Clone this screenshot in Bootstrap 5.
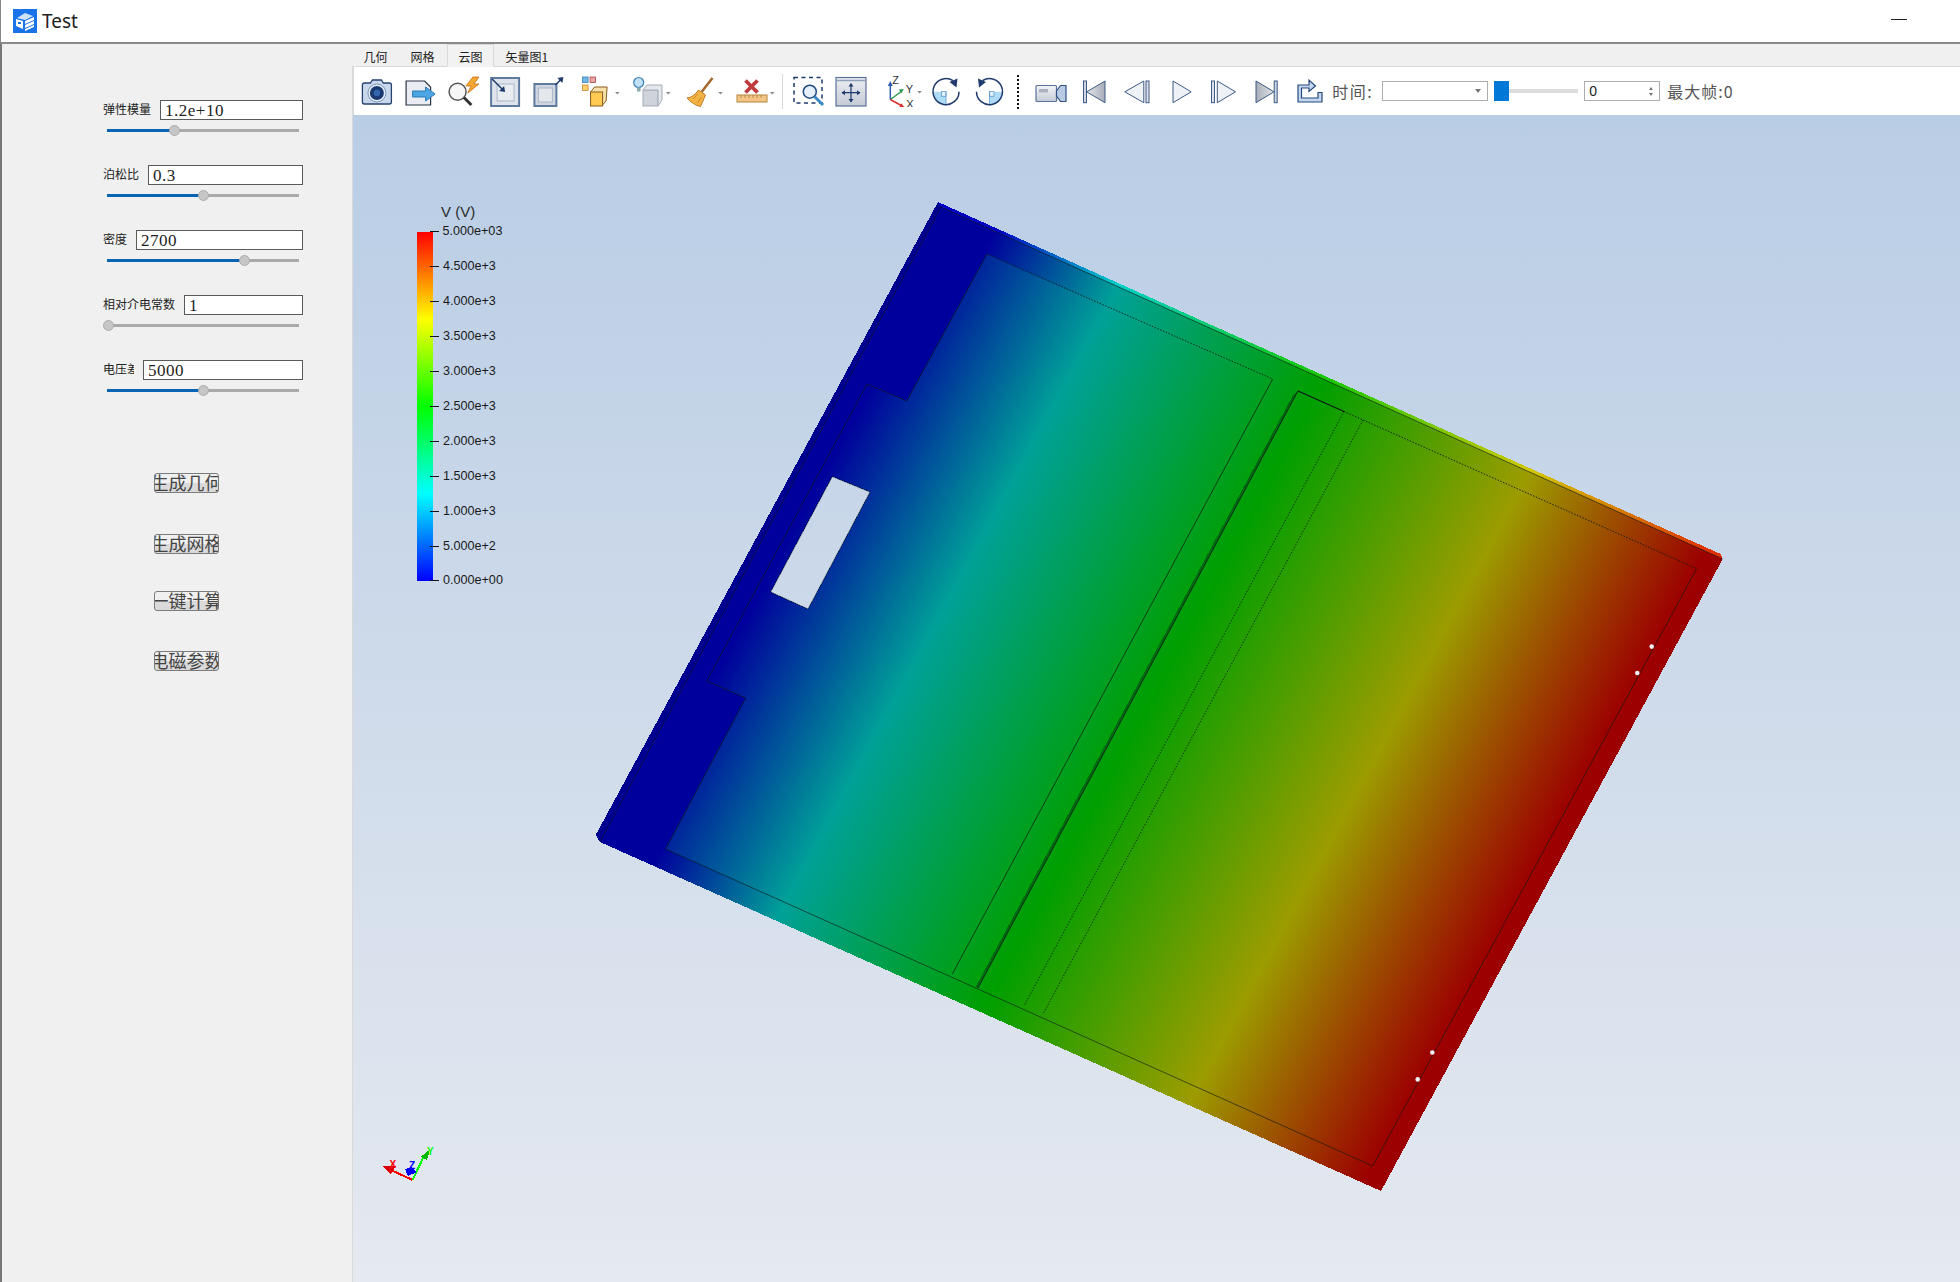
<!DOCTYPE html>
<html lang="zh">
<head>
<meta charset="utf-8">
<title>Test</title>
<link href="https://cdn.jsdelivr.net/npm/bootstrap@5.3.0/dist/css/bootstrap.min.css" rel="stylesheet">
<style>
html,body{height:100%;margin:0;overflow:hidden;background:#f0f0f0}
body{font-family:"Liberation Sans","Noto Sans CJK SC",sans-serif;color:#222}
.app-title{height:44px;background:#fff;border-left:1px solid #888;border-bottom:2px solid #8a8a8a;flex:none;padding-left:12px}
.app-title-text{font-family:"Noto Sans",sans-serif;font-size:19px;margin-left:5px;color:#222;line-height:1}
.win-min{width:16px;height:1px;background:#222;margin-left:auto;margin-right:53px;margin-top:-3px}
.app-main{flex:1 1 auto;min-height:0;border-left:2px solid #777}
.side-panel{width:350px;flex:none;background:#f0f0f0;padding:56px 0 0 101px}
.prop-group{width:200px;margin-bottom:33px}
.prop-label{font-family:"Noto Sans CJK SC",sans-serif;font-size:12px;line-height:14px;color:#222;white-space:nowrap;margin-right:9px;flex:none;margin-top:-2px}
.prop-clip{width:31px;overflow:hidden}
.prop-input.form-control{height:20px;min-height:20px;border:1.5px solid #5a5a5a;border-radius:0;padding:2px 4px 0;font-family:"Liberation Serif","Noto Sans CJK SC",serif;font-size:17px;letter-spacing:.5px;line-height:17px;color:#222;background:#fff;flex:1 1 0;min-width:0;box-shadow:none}
.slide-track{position:relative;height:3px;background:#aaa;margin:9px 4px 0 4px;width:192px}
.slide-fill{height:3px;background:#0a64b4}
.slide-knob{position:absolute;top:-4px;width:11px;height:11px;margin-left:-5.5px;border-radius:50%;background:#c6c6c6;border:1px solid #adadad}
.act-btn.btn{width:65px;height:20px;padding:0;margin-left:51px;overflow:hidden;white-space:nowrap;border:1.5px solid #7c7c7c;border-radius:3px;background:linear-gradient(#f0f0f0 0 50%,#dadada 50% 100%);font-family:"Noto Sans CJK SC",sans-serif;font-size:18px;line-height:16px;color:#444;display:flex;justify-content:center;font-weight:400}
.act-first{margin-top:81px}
.act-b{margin-top:41px}
.act-c{margin-top:37px}
.act-d{margin-top:40px}
.work-area{flex:1 1 0;min-width:0;min-height:0}
.tab-strip.nav-tabs{height:23px;flex:none;background:#f0f0f0;border-bottom:1px solid #d9d9d9;flex-wrap:nowrap}
.tab-strip .nav-link{padding:0 10.5px;height:23px;line-height:23px;font-family:"Noto Sans CJK SC",sans-serif;font-size:12px;color:#222;border:1px solid transparent;border-radius:0;margin:0;background:transparent}
.tab-strip .nav-link.active{background:#f2f2f2;color:#222;border-color:#d9d9d9 #d9d9d9 #f2f2f2;margin-left:1px}
.tool-strip{height:48px;flex:none;background:#fff;border-left:2px solid #d9d9d9;padding-left:1px;white-space:nowrap}
.tool-strip svg{display:block;flex:none}
.tool-label{font-family:"Noto Sans CJK SC",sans-serif;font-size:16px;color:#555;letter-spacing:1px;line-height:1}
.time-label{width:42px;margin-left:2px;flex:none;letter-spacing:1.5px;overflow:visible}
.time-combo{width:106px;height:20px;border:1.5px solid #adadad;background:#fff;margin-left:8px;padding-right:6px;flex:none}
.combo-caret{width:0;height:0;border-left:3px solid transparent;border-right:3px solid transparent;border-top:4px solid #777;margin-left:auto}
.frame-slider{position:relative;width:84px;height:4px;background:#dcdcdc;margin-left:6px;flex:none}
.frame-thumb{position:absolute;left:0;top:-8px;width:15px;height:20px;background:#0078d7}
.frame-spin{width:76px;height:20px;border:1.5px solid #adadad;background:#fff;margin-left:6px;padding:0 6px 0 4px;font-family:"Liberation Sans",sans-serif;font-size:14px;color:#222;flex:none}
.spin-arrows{margin-left:auto;gap:3px}
.spin-up{width:0;height:0;border-left:2.5px solid transparent;border-right:2.5px solid transparent;border-bottom:3px solid #777}
.spin-dn{width:0;height:0;border-left:2.5px solid transparent;border-right:2.5px solid transparent;border-top:3px solid #777}
.max-frame{margin-left:7px}
.view-3d{flex:1 1 auto;min-height:0;border-left:1px solid #d9d9d9;background:linear-gradient(#b9cde5,#e5e9f0)}
.view-3d svg{display:block;width:100%;height:100%}
.leg-text{font-family:"Liberation Sans",sans-serif;font-size:12.6px;fill:#1a1a1a}
.leg-title{font-family:"Liberation Sans",sans-serif;font-size:15px;fill:#2a2a2a}
.axis-char{font-family:"Liberation Sans",sans-serif;font-size:10px;font-weight:700}
.ico-char{font-family:"Liberation Sans",sans-serif;font-size:11px;fill:#333}
</style>
</head>
<body class="d-flex flex-column">
<header class="app-title d-flex align-items-center">
  <svg width="24" height="24" viewBox="0 0 24 24" aria-hidden="true"><rect width="24" height="24" fill="#1a73e8"/><path d="M4 9 12 4 20 7 12 11Z" fill="#cfe2fb"/><path d="M3 10 10 12V20L3 17Z" fill="#fff"/><path d="M12 12 21 8V11L12 15ZM12 16 21 12V15L12 19ZM12 20 21 16V18L12 22Z" fill="#fff"/><path d="M5 13h3v2H5z" fill="#1a73e8"/></svg>
  <span class="app-title-text">Test</span>
  <div class="win-min"></div>
</header>
<div class="app-main d-flex">
  <aside class="side-panel">
    <div class="prop-group">
      <div class="d-flex align-items-center"><span class="prop-label">弹性模量</span><input class="form-control prop-input" value="1.2e+10"></div>
      <div class="slide-track"><div class="slide-fill" style="width:35.4%"></div><div class="slide-knob" style="left:35.4%"></div></div>
    </div>
    <div class="prop-group">
      <div class="d-flex align-items-center"><span class="prop-label">泊松比</span><input class="form-control prop-input" value="0.3"></div>
      <div class="slide-track"><div class="slide-fill" style="width:50%"></div><div class="slide-knob" style="left:50%"></div></div>
    </div>
    <div class="prop-group">
      <div class="d-flex align-items-center"><span class="prop-label">密度</span><input class="form-control prop-input" value="2700"></div>
      <div class="slide-track"><div class="slide-fill" style="width:71.5%"></div><div class="slide-knob" style="left:71.5%"></div></div>
    </div>
    <div class="prop-group">
      <div class="d-flex align-items-center"><span class="prop-label">相对介电常数</span><input class="form-control prop-input" value="1"></div>
      <div class="slide-track"><div class="slide-knob" style="left:.8%"></div></div>
    </div>
    <div class="prop-group">
      <div class="d-flex align-items-center"><span class="prop-label prop-clip">电压差</span><input class="form-control prop-input" value="5000"></div>
      <div class="slide-track"><div class="slide-fill" style="width:50.5%"></div><div class="slide-knob" style="left:50.5%"></div></div>
    </div>
    <button type="button" class="btn act-btn act-first">生成几何</button>
    <button type="button" class="btn act-btn act-b">生成网格</button>
    <button type="button" class="btn act-btn act-c">一键计算</button>
    <button type="button" class="btn act-btn act-d">电磁参数</button>
  </aside>
  <section class="work-area d-flex flex-column">
    <ul class="nav nav-tabs tab-strip">
      <li class="nav-item"><a class="nav-link" href="#">几何</a></li>
      <li class="nav-item"><a class="nav-link" href="#">网格</a></li>
      <li class="nav-item"><a class="nav-link active" href="#">云图</a></li>
      <li class="nav-item"><a class="nav-link" href="#">矢量图1</a></li>
    </ul>
    <div class="tool-strip d-flex align-items-center">
      <svg width="42.75" height="32" viewBox="354.6 75 42.75 32"><path d="M362 85q0-2 2-2h6l2-3h9l2 3h6q2 0 2 2v17q0 2-2 2h-25q-2 0-2-2z" fill="#c8d7ec" stroke="#26426f" stroke-width="1.3"/><circle cx="376.5" cy="93" r="9" fill="#e6edf6" stroke="#7b96bb"/><circle cx="376.5" cy="93" r="7" fill="#1b3a72"/><circle cx="376.5" cy="93" r="3.2" fill="#3266ad"/></svg>
      <svg width="42.75" height="32" viewBox="397.4 75 42.75 32"><path d="M405.5 81H424l6 6v18h-24.5z" fill="#e9edf3" stroke="#2a3344" stroke-width="1.2"/><path d="M412 91h13v-4l9.5 7-9.5 7v-4h-13z" fill="#4ba5e3" stroke="#2a7ab8"/></svg>
      <svg width="42.75" height="32" viewBox="440.1 75 42.75 32"><circle cx="456.7" cy="91.7" r="8.5" fill="#f6f6f6" stroke="#555" stroke-width="1.5"/><path d="M463 97.500l7.500 7.500" stroke="#333" stroke-width="3"/><path d="M472 77h6l-5 7h5l-11 9 3-7h-5z" fill="#f4a733" stroke="#c86e10" stroke-width=".8"/></svg>
      <svg width="42.75" height="32" viewBox="482.9 75 42.75 32"><rect x="491" y="78" width="28" height="28" fill="#dfe4ec" stroke="#5e7a9f" stroke-width="2"/><rect x="497" y="84" width="17" height="17" fill="#e9ecf1" stroke="#a9b6c8"/><path d="M492 79l11 11" stroke="#1e3a6e" stroke-width="1.5"/><path d="M505 92l-6-1 5-5z" fill="#1e3a6e"/></svg>
      <svg width="42.75" height="32" viewBox="525.6 75 42.75 32"><rect x="534" y="84" width="22" height="22" fill="#cfd6e0" stroke="#5e7a9f" stroke-width="2"/><rect x="538" y="88" width="14" height="14" fill="#e4e7ec" stroke="#a9b6c8"/><path d="M555 85l6-6" stroke="#1e3a6e" stroke-width="1.5"/><path d="M563 77l-1 6-5-5z" fill="#1e3a6e"/></svg>
      <svg width="52.6" height="32" viewBox="568.4 75 52.6 32"><rect x="582" y="77" width="5.5" height="5.5" fill="#6fb6e6" stroke="#3a7fb5" stroke-width=".8"/><rect x="589.5" y="77" width="5.5" height="5.5" fill="#e9a7a7" stroke="#a44" stroke-width=".8"/><rect x="582" y="85" width="5.5" height="5.5" fill="#ffd070" stroke="#c8862a" stroke-width=".8"/><path d="M590 92l4-5h12.500l-1 14-4.500 5z" fill="#f7e0a8" stroke="#8a5a20"/><rect x="590" y="92" width="12" height="14" fill="#ffcb52" stroke="#8a5a20"/><path d="M614.500 92h4.500l-2.200 2.500z" fill="#888"/></svg>
      <svg width="52.5" height="32" viewBox="621 75 52.5 32"><rect x="643" y="90" width="15" height="16" fill="#cfd3da" stroke="#a5adb9"/><path d="M643 90l4-5h15v15l-4 6v-16z" fill="#e4e7eb" stroke="#a5adb9"/><circle cx="638.700" cy="82.500" r="5" fill="#bfe0f5" stroke="#3a7fb5" stroke-width="1.200"/><path d="M637 87.500h3.500v4H637z" fill="#8aa" /><path d="M666 92h4.500l-2.200 2.500z" fill="#888"/></svg>
      <svg width="52.5" height="32" viewBox="673.5 75 52.5 32"><path d="M712 78 701 92" stroke="#a5672a" stroke-width="2.500"/><path d="M698 90l7 5-5 11.500q-8-2-13.500-8.500 7-1 11.500-8z" fill="#f3b446" stroke="#c47a1c"/><path d="M693 99l4-5M697 103l4-6" stroke="#c47a1c" stroke-width=".8"/><path d="M717.700 92h4.500l-2.200 2.500z" fill="#888"/></svg>
      <svg width="52.5" height="32" viewBox="726 75 52.500 32"><path d="M745.500 80.500l12 12M757.500 80.500l-12 12" stroke="#bf3a3c" stroke-width="3.800"/><rect x="737" y="95" width="30" height="7" fill="#f2c486" stroke="#b5853a"/><path d="M741 95v3M745 95v3M749 95v3M753 95v3M757 95v3M761 95v3" stroke="#b5853a" stroke-width=".8"/><path d="M770 92h4.500l-2.200 2.500z" fill="#888"/></svg>
      <svg width="7" height="36" viewBox="778.500 73 7 36"><path d="M782 74v35" stroke="#d8d8d8" stroke-width="1"/></svg>
      <svg width="43.500" height="32" viewBox="785.500 75 43.500 32"><rect x="793.500" y="77.500" width="28" height="25.500" fill="none" stroke="#1e3a6e" stroke-width="1.500" stroke-dasharray="4 3.500"/><circle cx="809.300" cy="91.700" r="6.500" fill="#e6f0f9" stroke="#1f4a80" stroke-width="1.500"/><path d="M814 96.500l8.500 8.500" stroke="#3b8ac4" stroke-width="3"/></svg>
      <svg width="43.700" height="32" viewBox="829 75 43.700 32"><defs><linearGradient id="pang" x1="0" y1="0" x2="0" y2="1"><stop offset="0" stop-color="#eceef2"/><stop offset="1" stop-color="#c4cad4"/></linearGradient></defs><rect x="836" y="77.500" width="30" height="28.500" fill="url(#pang)" stroke="#5a7199" stroke-width="1.200"/><path d="M836 80.500h30" stroke="#8ea0bb" stroke-width="1.500"/><path d="M842 92.700h18M851 83.700v18" stroke="#1e3a6e" stroke-width="1.200"/><path d="M851 83l-2.500 3.500h5zM851 102.500l-2.500-3.500h5zM841.500 92.700l3.500-2.500v5zM860.500 92.700l-3.500-2.500v5z" fill="#1e3a6e"/></svg>
      <svg width="52.300" height="32" viewBox="872.700 75 52.300 32"><path d="M890 99.500V85" stroke="#2a5db0" stroke-width="1.500"/><path d="M890 81l-2.500 5h5z" fill="#2a5db0"/><path d="M890 99.500l11-8" stroke="#2a9a4a" stroke-width="1.500"/><path d="M903.500 89l-5 .5 2.500 4z" fill="#2a9a4a"/><path d="M890 99.500l11 6" stroke="#d83030" stroke-width="1.500"/><path d="M904.500 107.700l-5.500-.5 2-4z" fill="#d83030"/><text class="ico-char" x="892" y="84">Z</text><text class="ico-char" x="905.500" y="93">Y</text><text class="ico-char" x="906" y="108">X</text><path d="M917 91h4.500l-2.200 2.500z" fill="#888"/></svg>
      <svg width="42.500" height="32" viewBox="925 75 42.500 32"><path d="M946 91.700h-13a13 13 0 0 0 13 13z" fill="#aedbf6"/><rect x="941.500" y="91.700" width="4.500" height="4.500" fill="#e8f5fd" stroke="#4a90c8" stroke-width=".7"/><path d="M946 91.700v13" stroke="#4a90c8" stroke-width=".7"/><path d="M953 80.700A13 13 0 1 0 959 91.700" fill="none" stroke="#1e3a6e" stroke-width="1.500"/><path d="M957.500 78.500l-1 9-7-5.500z" fill="#1e3a6e"/></svg>
      <svg width="42.500" height="32" viewBox="967.500 75 42.500 32"><path d="M989 91.700h13a13 13 0 0 1-13 13z" fill="#aedbf6"/><rect x="989" y="91.700" width="4.500" height="4.500" fill="#e8f5fd" stroke="#4a90c8" stroke-width=".7"/><path d="M989 91.700v13" stroke="#4a90c8" stroke-width=".7"/><path d="M982 80.700A13 13 0 1 1 976 91.700" fill="none" stroke="#1e3a6e" stroke-width="1.500"/><path d="M977.500 78.500l1 9 7-5.500z" fill="#1e3a6e"/></svg>
      <svg width="16" height="36" viewBox="1010 73 16 36"><path d="M1018 75v34" stroke="#111" stroke-width="2" stroke-dasharray="2 2"/></svg>
      <svg width="47" height="32" viewBox="1026 75 47 32"><defs><linearGradient id="vidg" x1="0" y1="0" x2="0" y2="1"><stop offset="0" stop-color="#f2f4f7"/><stop offset="1" stop-color="#c6ccd6"/></linearGradient></defs><rect x="1036" y="85.500" width="20.500" height="16" rx="1" fill="url(#vidg)" stroke="#5a7199" stroke-width="1.200"/><rect x="1039" y="89" width="9" height="3.500" fill="#aab1bc"/><path d="M1056.500 91l4-5.500h5.500v16h-5.500l-4-5.500z" fill="#b9cbe2" stroke="#2c5183" stroke-width="1.200"/></svg>
      <svg width="42.500" height="32" viewBox="1073 75 42.500 32"><defs><linearGradient id="gl" x1="0" y1="0" x2="1" y2="0"><stop offset="0" stop-color="#e3e6ea"/><stop offset="1" stop-color="#a7adb8"/></linearGradient><linearGradient id="gr" x1="0" y1="0" x2="1" y2="0"><stop offset="0" stop-color="#a7adb8"/><stop offset="1" stop-color="#e3e6ea"/></linearGradient></defs><rect x="1083.500" y="81" width="3" height="21.700" fill="#cdd5e0" stroke="#3e5a85"/><path d="M1105 81v21.700L1086.700 91.800z" fill="url(#gl)" stroke="#3e5a85"/></svg>
      <svg width="42" height="32" viewBox="1115.500 75 42 32"><path d="M1143.300 81v21.700l-19-10.900z" fill="#eef1f5" stroke="#3e5a85"/><rect x="1145.500" y="81" width="3" height="21.700" fill="#dde2ea" stroke="#3e5a85"/></svg>
      <svg width="44.500" height="32" viewBox="1157.500 75 44.500 32"><path d="M1172.500 81v21.700l18.200-10.900z" fill="#eef1f5" stroke="#3e5a85"/></svg>
      <svg width="42.500" height="32" viewBox="1202 75 42.500 32"><rect x="1211.500" y="81" width="3" height="21.700" fill="#dde2ea" stroke="#3e5a85"/><path d="M1217.300 81v21.700l18.200-10.900z" fill="#eef1f5" stroke="#3e5a85"/></svg>
      <svg width="42.500" height="32" viewBox="1244.500 75 42.500 32"><path d="M1255.500 81v21.700l18-10.900z" fill="url(#gr)" stroke="#3e5a85"/><rect x="1273.700" y="81" width="3" height="21.700" fill="#cdd5e0" stroke="#3e5a85"/></svg>
      <svg width="43" height="32" viewBox="1287 75 43 32"><path d="M1298 85h11v-5l6.500 6-6.500 5.500v-3.500h-7.500v10h16.500v-5.500h4V102h-24z" fill="#c3d7ee" stroke="#27487c" stroke-width="1.200"/></svg>
      <span class="tool-label time-label">时间:</span>
      <div class="time-combo d-flex align-items-center"><span class="combo-caret"></span></div>
      <div class="frame-slider"><div class="frame-thumb"></div></div>
      <div class="frame-spin d-flex align-items-center"><span>0</span><span class="spin-arrows d-flex flex-column"><i class="spin-up"></i><i class="spin-dn"></i></span></div>
      <span class="tool-label max-frame">最大帧:0</span>
    </div>
    <div class="view-3d">
      <svg viewBox="353 115 1607 1167" preserveAspectRatio="none" aria-label="3D view">
        <defs>
          <linearGradient id="fieldMain" gradientUnits="userSpaceOnUse" x1="835.800" y1="451.500" x2="1551" y2="838">
            <stop offset="0" stop-color="#00009c"/><stop offset=".209" stop-color="#00a098"/><stop offset=".486" stop-color="#009f00"/><stop offset=".763" stop-color="#9c9c00"/><stop offset="1" stop-color="#9c0000"/>
          </linearGradient>
          <linearGradient id="fieldOuter" gradientUnits="userSpaceOnUse" x1="866.600" y1="468.200" x2="1551" y2="838">
            <stop offset="0" stop-color="#00009c"/><stop offset=".1735" stop-color="#00a098"/><stop offset=".4627" stop-color="#009f00"/><stop offset=".752" stop-color="#9c9c00"/><stop offset="1" stop-color="#9c0000"/>
          </linearGradient>
          <linearGradient id="fieldEdge" gradientUnits="userSpaceOnUse" x1="866.600" y1="468.200" x2="1551" y2="838">
            <stop offset="0" stop-color="#0000c8"/><stop offset=".1735" stop-color="#00d0c8"/><stop offset=".4627" stop-color="#18c800"/><stop offset=".752" stop-color="#d0c800"/><stop offset="1" stop-color="#e03000"/>
          </linearGradient>
          <linearGradient id="legendBar" x1="0" y1="0" x2="0" y2="1">
            <stop offset="0" stop-color="#f00"/><stop offset=".25" stop-color="#ff0"/><stop offset=".5" stop-color="#0f0"/><stop offset=".75" stop-color="#0ff"/><stop offset="1" stop-color="#00f"/>
          </linearGradient>
        </defs>
        <g shape-rendering="crispEdges">
          <path fill-rule="evenodd" fill="url(#fieldOuter)" d="M938 202 1720.700 554 1722.700 559 1381 1191 600 842 595.700 835ZM832.300 476.600 770.700 592 808 609 870 492Z"/>
          <path fill-rule="evenodd" fill="url(#fieldMain)" d="M987 254 906.700 401 867 384 706.700 681 745.700 698 665.700 849 1372.700 1166 1696.700 568.600ZM832.300 476.600 770.700 592 808 609 870 492Z"/>
          <path fill="url(#fieldEdge)" d="M938 202 1720.700 554 1722.700 559 941 207Z"/>
          <path fill="#000090" d="M938 202 941 207 600 842 595.700 835Z"/>
          <path fill="#006a10" d="M1293 395 1298 391 978 988 975.500 987Z"/>
        </g>
        <g fill="none" stroke="#101a14" stroke-width=".9">
          <path d="M941 207 600 842" stroke-opacity=".6"/>
          <path d="M941 207 1722.700 559" stroke-opacity=".7"/>
          <path d="M987 254 906.700 401 867 384 706.700 681 745.700 698 665.700 849 1372.700 1166 1696.700 568.600" stroke-opacity=".7"/>
          <path d="M987 254 1272.700 379M1344 411.500 1696.700 568.600" stroke-dasharray="1.500 1.500"/>
          <path d="M1272.700 379 952.300 974" stroke-opacity=".8"/>
          <path d="M1298 391 978 988" stroke-opacity=".9"/>
          <path d="M1298 391 1344 411.500" stroke-width="1.200"/>
          <path d="M1344 411.500 1024 1006M1363 420 1043 1014" stroke-dasharray="1.300 1.700"/>
          <path d="M832.300 476.600 770.700 592 808 609 870 492Z" stroke-opacity=".6"/>
        </g>
        <g fill="#eef2f7"><circle cx="1651.700" cy="646.600" r="2.300"/><circle cx="1637.300" cy="673" r="2.300"/><circle cx="1432.300" cy="1052.500" r="2.300"/><circle cx="1417.700" cy="1079.400" r="2.300"/></g>
        <rect x="417" y="232" width="16" height="349" fill="url(#legendBar)"/>
        <path stroke="#111" stroke-width="1" d="M430 231.500h9M430 266.500h9M430 301.500h9M430 336.500h9M430 371.500h9M430 406.500h9M430 441.500h9M430 476.500h9M430 511.500h9M430 546.500h9M430 580.500h9"/>
        <text class="leg-title" x="441" y="217">V (V)</text>
        <text class="leg-text" x="442.500" y="234.500">5.000e+03</text>
        <text class="leg-text" x="443" y="269.500">4.500e+3</text>
        <text class="leg-text" x="443" y="304.500">4.000e+3</text>
        <text class="leg-text" x="443" y="339.500">3.500e+3</text>
        <text class="leg-text" x="443" y="374.500">3.000e+3</text>
        <text class="leg-text" x="443" y="409.500">2.500e+3</text>
        <text class="leg-text" x="443" y="444.500">2.000e+3</text>
        <text class="leg-text" x="443" y="479.500">1.500e+3</text>
        <text class="leg-text" x="443" y="514.500">1.000e+3</text>
        <text class="leg-text" x="443" y="549.500">5.000e+2</text>
        <text class="leg-text" x="443" y="583.500">0.000e+00</text>
        <g shape-rendering="crispEdges">
          <path d="M412.700 1180 393 1171" stroke="#f00" stroke-width="2"/>
          <path d="M383.300 1166.500 396 1166 391 1174Z" fill="#e00000"/>
          <path d="M412.700 1180 423 1158" stroke="#0f0" stroke-width="2"/>
          <path d="M430 1149.500 420.500 1157 427 1160Z" fill="#00b800"/>
          <path d="M405 1169 411 1167 417 1172 408 1176Z" fill="#0000f0"/>
        </g>
        <text class="axis-char" fill="#f00" x="389.500" y="1168">X</text>
        <text class="axis-char" fill="#0f0" x="427" y="1155">Y</text>
        <text class="axis-char" fill="#00f" x="409" y="1169">Z</text>
      </svg>
    </div>
  </section>
</div>
</body>
</html>
